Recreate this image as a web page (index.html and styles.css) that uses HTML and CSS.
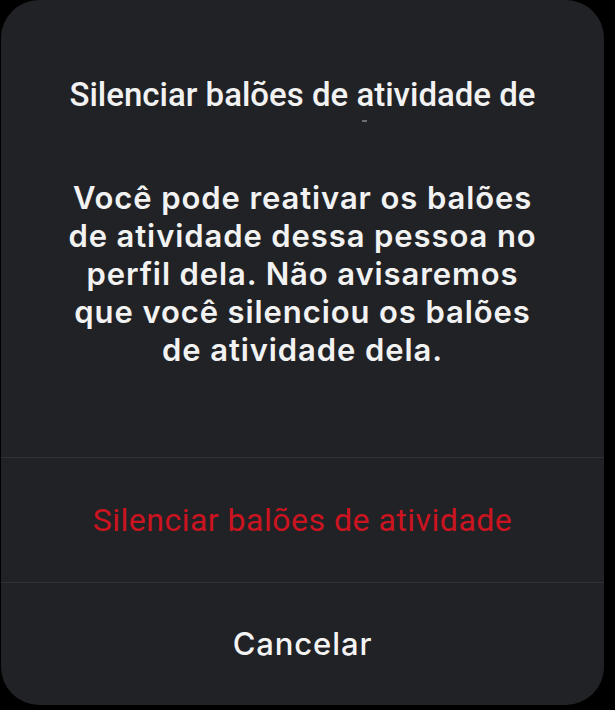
FILE: index.html
```html
<!DOCTYPE html>
<html lang="pt-BR">
<head>
  <meta charset="UTF-8" />
  <meta name="viewport" content="width=device-width, initial-scale=1.0" />
  <link rel="stylesheet" href="styles.css">
</head>
<body>

  <div class="sheet">
    <div class="sheet-header">
      <h1 class="sheet-title">Silenciar balões de atividade de</h1>
      <div class="sheet-title-clip"></div>
      <p class="sheet-text">
        Você pode reativar os balões<br>
        de atividade dessa pessoa no<br>
        perfil dela. Não avisaremos<br>
        que você silenciou os balões<br>
        de atividade dela.
      </p>
    </div>

    <button class="sheet-action danger">Silenciar balões de atividade</button>
    <button class="sheet-action">Cancelar</button>
  </div>

</body>
</html>
```

FILE: styles.css
```css
body {
  margin: 0;
  background: #000;
  height: 710px;
  overflow: hidden;
}

.sheet {
  width: 603px;
  height: 705px;
  margin-left: 1px;
  background-color: #212226;
  border-radius: 38px;
  display: flex;
  flex-direction: column;
  overflow: hidden;
}

.sheet-header {
  height: 457px;
  box-sizing: border-box;
  padding: 76px 20px 0;
  text-align: center;
}

.sheet-title {
  margin: 0;
  font-family: Roboto, sans-serif;
  font-weight: 500;
  font-size: 33px;
  line-height: 38px;
  color: #f2f2f2;
}

/* what's left of the clipped second title line */
.sheet-title-clip {
  width: 5px;
  height: 2px;
  margin: 6px 0 0 341px;
  background-color: #6c6d72;
}

.sheet-text {
  margin: 57px 0 0;
  font-family: Inter, sans-serif;
  font-weight: 600;
  font-size: 31px;
  letter-spacing: 0.9px;
  line-height: 38px;
  color: #f2f2f2;
}

.sheet-action {
  flex: 1;
  display: flex;
  justify-content: center;
  align-items: center;
  border: none;
  border-top: 1px solid #303135;
  background: none;
  font-family: Inter, sans-serif;
  font-weight: 500;
  font-size: 31px;
  letter-spacing: 0.9px;
  color: #f4f4f4;
  cursor: pointer;
}

.sheet-action.danger {
  font-family: Roboto, sans-serif;
  font-weight: 400;
  font-size: 32px;
  letter-spacing: 0.5px;
  color: #cc1420;
  padding-top: 2px;
}
```
